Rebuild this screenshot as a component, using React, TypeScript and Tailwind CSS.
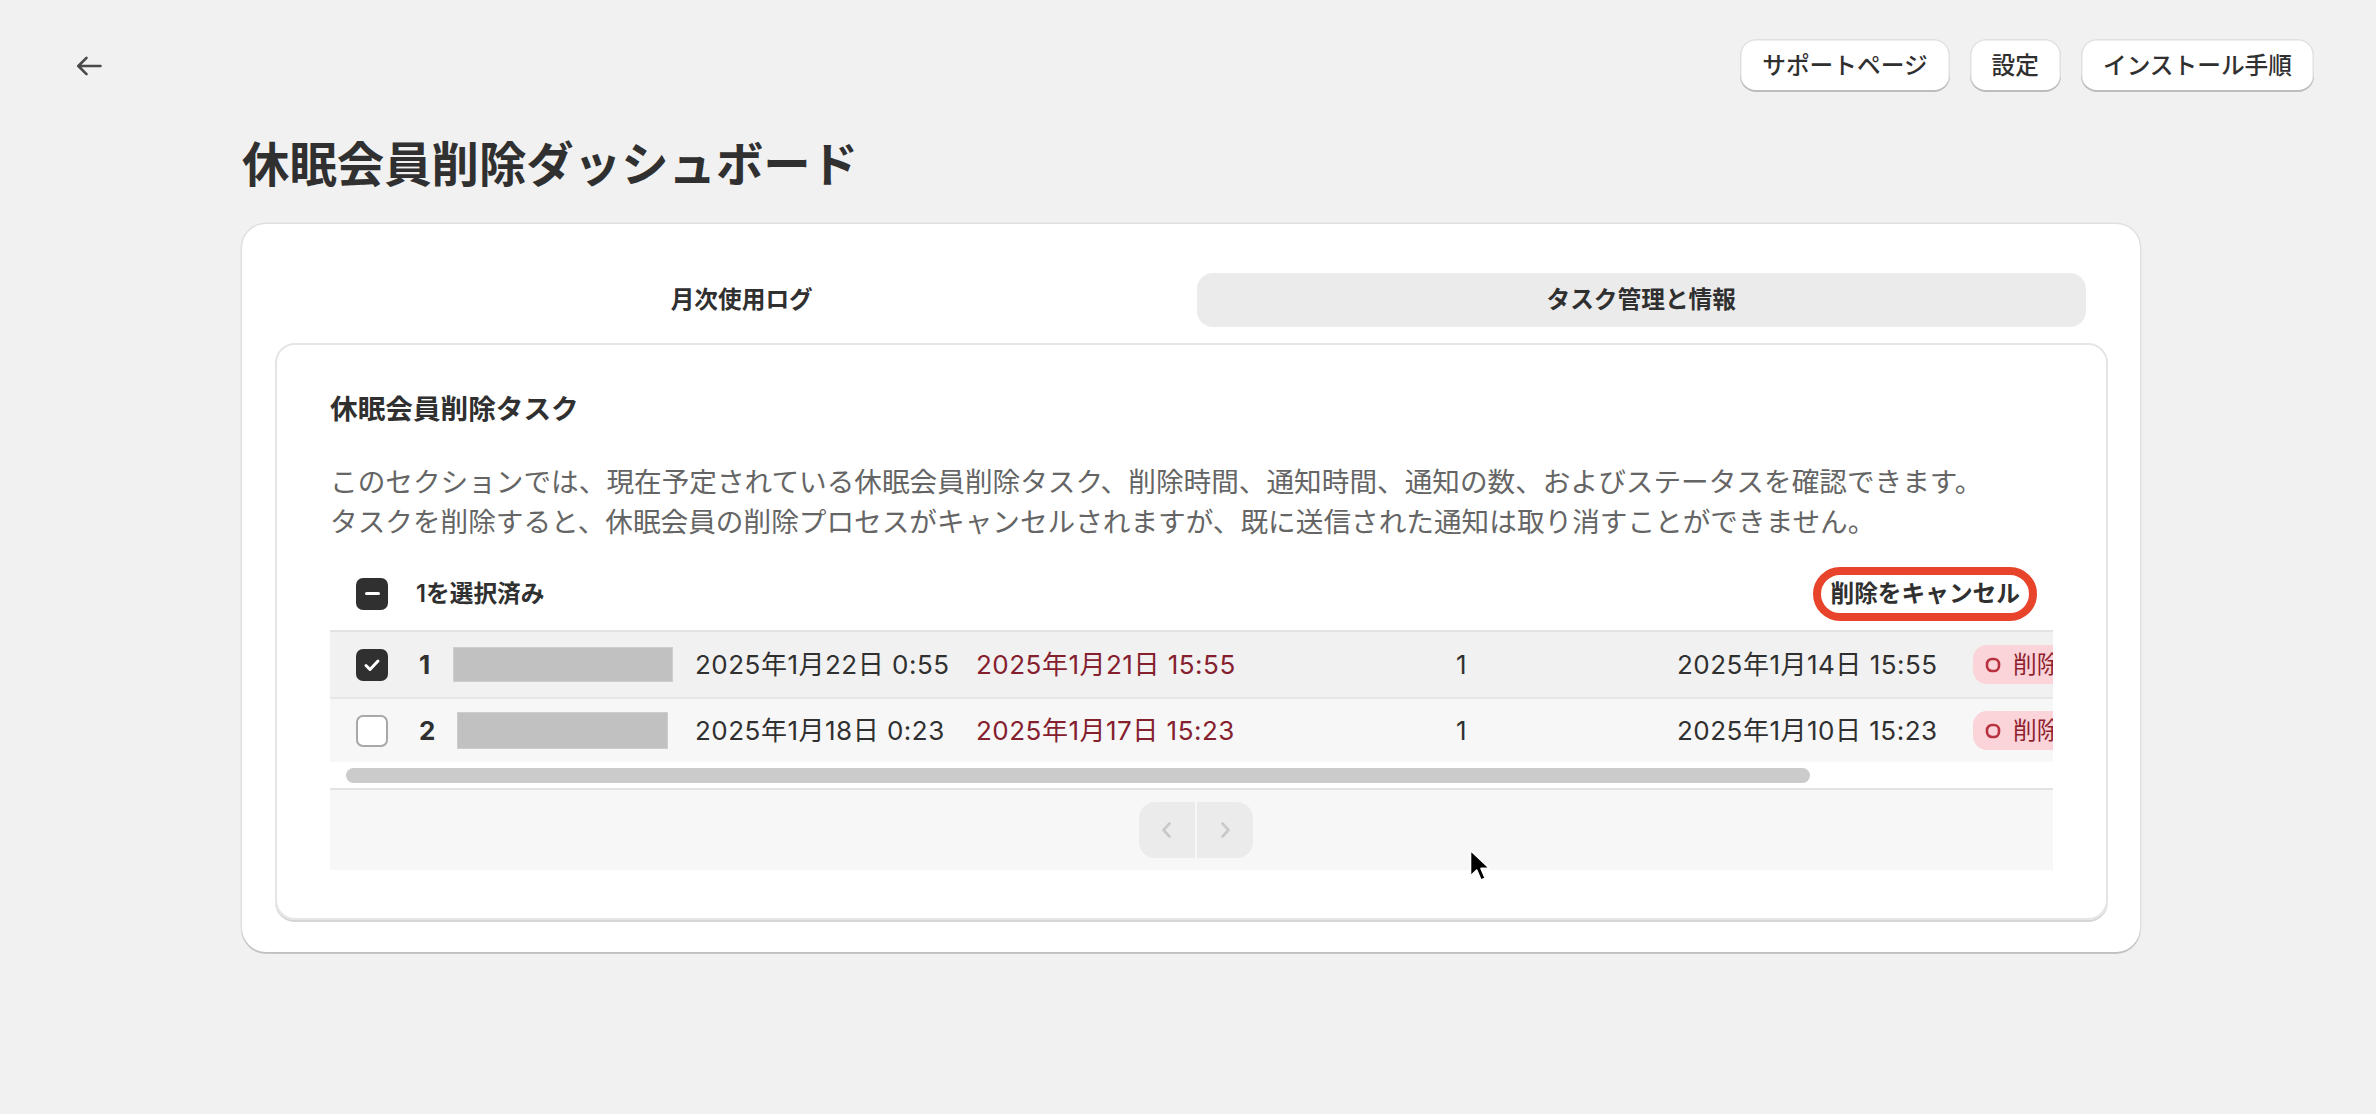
import React from "react";

type Row = {
  n: string;
  checked: boolean;
  bg: string;
  block: string;
  d1: string;
  d2: string;
  c: string;
  d3: string;
};

const rows: Row[] = [
  {
    n: "1",
    checked: true,
    bg: "bg-[#f1f1f1]",
    block: "w-[220px] h-[35px]",
    d1: "2025年1月22日 0:55",
    d2: "2025年1月21日 15:55",
    c: "1",
    d3: "2025年1月14日 15:55",
  },
  {
    n: "2",
    checked: false,
    bg: "bg-[#f7f7f7]",
    block: "w-[211px] h-[37px] ml-[4px]",
    d1: "2025年1月18日 0:23",
    d2: "2025年1月17日 15:23",
    c: "1",
    d3: "2025年1月10日 15:23",
  },
];

function BackArrow() {
  return (
    <svg width="26" height="20" viewBox="0 0 26 20" fill="none">
      <path
        d="M24.5 10H2.5M10.5 1.8L2.3 10l8.2 8.2"
        stroke="#4a4a4a"
        strokeWidth="2.6"
        strokeLinecap="round"
        strokeLinejoin="round"
      />
    </svg>
  );
}

function CheckboxDark({ kind }: { kind: "minus" | "check" }) {
  return (
    <div className="w-[32px] h-[32px] rounded-[7px] bg-[#303030] flex items-center justify-center shrink-0">
      {kind === "minus" ? (
        <div className="w-[15px] h-[3px] rounded-full bg-white" />
      ) : (
        <svg width="32" height="32" viewBox="0 0 32 32" fill="none">
          <path
            d="M10 16.5l4 4 8-8.5"
            stroke="white"
            strokeWidth="3"
            strokeLinecap="round"
            strokeLinejoin="round"
          />
        </svg>
      )}
    </div>
  );
}

function CheckboxEmpty() {
  return (
    <div className="w-[32px] h-[32px] rounded-[7px] bg-white border-2 border-[#a8a8a8] shrink-0" />
  );
}

function Chevron({ dir }: { dir: "left" | "right" }) {
  return (
    <svg width="20" height="20" viewBox="0 0 20 20" fill="none">
      <path
        d={dir === "left" ? "M12.5 3.5L6.5 10l6 6.5" : "M7.5 3.5l6 6.5-6 6.5"}
        stroke="#c9c9c9"
        strokeWidth="2.6"
        strokeLinecap="round"
        strokeLinejoin="round"
      />
    </svg>
  );
}

function Cursor() {
  return (
    <svg width="24" height="36" viewBox="0 0 24 36" fill="none">
      <path
        d="M1.5 1.5V27l6.2-6 4.3 10 4.2-1.8-4.2-9.8h8.6L1.5 1.5z"
        fill="black"
        stroke="white"
        strokeWidth="1.6"
        strokeLinejoin="round"
      />
    </svg>
  );
}

export default function App() {
  return (
    <div className="relative w-full min-h-[1114px] bg-[#f1f1f1] text-[#303030] font-['Inter','Noto_Sans_CJK_JP',sans-serif] overflow-hidden">
      {/* Header */}
      <div className="flex items-center justify-between pt-[39px] pl-[63px] pr-[62px]">
        <button className="w-[52px] h-[52px] flex items-center justify-center">
          <BackArrow />
        </button>
        <div className="flex items-center gap-[20px]">
          {["サポートページ", "設定", "インストール手順"].map((t) => (
            <button
              key={t}
              className="h-[53px] px-[22px] rounded-[16px] bg-white text-[23.7px] font-medium text-[#303030] shadow-[inset_0_-2px_0_0_#bdbdbd,inset_0_0_0_1.5px_#e0e0e0]"
            >
              {t}
            </button>
          ))}
        </div>
      </div>

      <div className="w-[1898px] ml-[242px]">
        <h1 className="mt-[41px] text-[47.4px] leading-[64px] font-bold text-[#303030]">
          休眠会員削除ダッシュボード
        </h1>

        {/* Outer card */}
        <div className="mt-[27px] bg-white rounded-[24px] pt-[49px] pb-[32px] pl-[33px] pr-[32px] shadow-[0_2px_0_0_rgba(0,0,0,0.14),0_0_0_1.5px_rgba(0,0,0,0.07)]">
          {/* Tabs */}
          <div className="flex gap-[10px] px-[22px]">
            <div className="flex-1 h-[54px] rounded-[16px] flex items-center justify-center text-[23.7px] font-semibold text-[#303030]">
              月次使用ログ
            </div>
            <div className="flex-1 h-[54px] rounded-[16px] bg-[#ebebeb] flex items-center justify-center text-[23.7px] font-semibold text-[#303030]">
              タスク管理と情報
            </div>
          </div>

          {/* Inner card */}
          <div className="mt-[16px] rounded-[20px] border-2 border-[#e5e5e5] shadow-[0_2px_0_0_#d6d6d6] pt-[44px] pb-[48px] pl-[53px] pr-[53px]">
            <h2 className="text-[27.65px] leading-[40px] font-bold text-[#303030]">
              休眠会員削除タスク
            </h2>
            <p className="mt-[33px] text-[27.65px] leading-[40px] text-[#656565]">
              <span className="block whitespace-nowrap">
                このセクションでは、現在予定されている休眠会員削除タスク、削除時間、通知時間、通知の数、およびステータスを確認できます。
              </span>
              <span className="block whitespace-nowrap">
                タスクを削除すると、休眠会員の削除プロセスがキャンセルされますが、既に送信された通知は取り消すことができません。
              </span>
            </p>

            {/* Bulk header */}
            <div className="mt-[16px] h-[72px] flex items-center justify-between pl-[26px] pr-[16px]">
              <div className="flex items-center">
                <CheckboxDark kind="minus" />
                <span className="ml-[28px] text-[23.7px] font-semibold text-[#303030]">
                  1を選択済み
                </span>
              </div>
              <div className="h-[54px] rounded-[27px] border-[8px] border-[#e8432b] bg-white px-[9px] flex items-center">
                <span className="text-[23.7px] font-semibold text-[#303030] whitespace-nowrap">
                  削除をキャンセル
                </span>
              </div>
            </div>

            {/* Table */}
            <div className="w-full overflow-hidden border-t-2 border-[#e3e3e3]">
              {rows.map((r, i) => (
                <div
                  key={r.n}
                  className={`flex items-center h-[65px] ${r.bg} ${
                    i > 0 ? "border-t-2 border-[#e6e6e6]" : ""
                  } text-[26px] tracking-[0.5px] whitespace-nowrap`}
                >
                  <div className="w-[89px] pl-[26px] shrink-0 flex items-center">
                    {r.checked ? <CheckboxDark kind="check" /> : <CheckboxEmpty />}
                  </div>
                  <div className="w-[34px] shrink-0 font-bold text-[#303030]">{r.n}</div>
                  <div className="w-[242px] shrink-0 flex items-center">
                    <div className={`${r.block} bg-[#c1c1c1] border border-[#cdcdcd]`} />
                  </div>
                  <div className="w-[281px] shrink-0 text-[#303030]">{r.d1}</div>
                  <div className="w-[480px] shrink-0 text-[#85202e]">{r.d2}</div>
                  <div className="w-[221px] shrink-0 text-[#303030]">{r.c}</div>
                  <div className="w-[296px] shrink-0 text-[#303030]">{r.d3}</div>
                  <div className="shrink-0 h-[39px] rounded-[14px] bg-[#fad4d9] pl-[12px] pr-[16px] flex items-center gap-[12px] text-[23.7px] tracking-normal text-[#8e1f2f]">
                    <svg width="16" height="16" viewBox="0 0 16 16" fill="none">
                      <rect x="2" y="2" width="12" height="12" rx="5" stroke="#b8323f" strokeWidth="2.6" />
                    </svg>
                    <span>削除予定</span>
                  </div>
                </div>
              ))}
              {/* scrollbar */}
              <div className="pt-[6px] pb-[5px] pl-[16px]">
                <div className="w-[1464px] h-[15px] rounded-full bg-[#cbcbcb]" />
              </div>
              {/* Pagination */}
              <div className="border-t-2 border-[#e3e3e3] bg-[#f7f7f7] h-[82px] flex items-center justify-center pl-[9px]">
                <div className="flex gap-[2px]">
                  <div className="w-[56px] h-[56px] rounded-l-[16px] bg-[#ebebeb] flex items-center justify-center">
                    <Chevron dir="left" />
                  </div>
                  <div className="w-[56px] h-[56px] rounded-r-[16px] bg-[#ebebeb] flex items-center justify-center">
                    <Chevron dir="right" />
                  </div>
                </div>
              </div>
            </div>
          </div>
        </div>
      </div>

      {/* mouse cursor */}
      <div className="absolute left-[1469px] top-[849px] pointer-events-none">
        <Cursor />
      </div>
    </div>
  );
}
